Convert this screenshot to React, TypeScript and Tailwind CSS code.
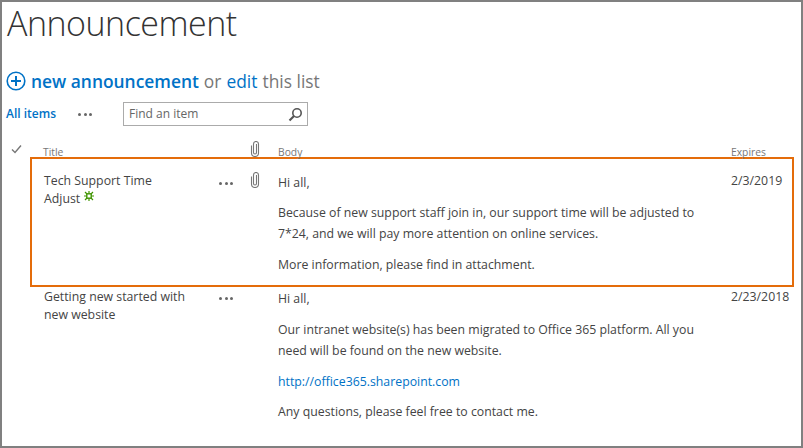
const font = { fontFamily: '"Open Sans", "Noto Sans", sans-serif' };

function Dots() {
  return (
    <div className="flex w-[32px] gap-[2.5px] pl-[1px]">
      <span className="w-[3px] h-[3px] rounded-full bg-[#666]" />
      <span className="w-[3px] h-[3px] rounded-full bg-[#666]" />
      <span className="w-[3px] h-[3px] rounded-full bg-[#666]" />
    </div>
  );
}

function Clip() {
  return (
    <svg width="10" height="16" viewBox="0 0 10 16" fill="none" stroke="#777" strokeWidth="1.1">
      <path d="M3.5 4v7.5a1.5 1.5 0 0 0 3 0V3" />
      <path d="M1.5 4.5v7.5a3.5 3.5 0 0 0 7 0V3a2.5 2.5 0 0 0-5 0v1" />
    </svg>
  );
}

export default function App() {
  return (
    <div style={font} className="w-[803px] h-[448px] overflow-hidden border-2 border-[#808080] bg-white text-[#444]">
      <h1 className="pl-[5px] pt-[1px] h-[44px] text-[34px] leading-[40px] tracking-[-0.5px] font-light text-[#333]">Announcement</h1>

      <div className="flex items-center mt-[19px] pl-[4px] h-[32px] text-[17.4px] text-[#777]">
        <svg width="20" height="20" viewBox="0 0 20 20" fill="none" stroke="#0072c6" strokeWidth="1.6" className="mr-[5px]">
          <circle cx="10" cy="10" r="8.8" />
          <path d="M10 5v10M5 10h10" strokeWidth="2" />
        </svg>
        <span className="font-semibold text-[#0072c6]">new announcement</span>
        <span className="ml-[5px]">or</span>
        <span className="ml-[5px] text-[#0072c6]">edit</span>
        <span className="ml-[5px]">this list</span>
      </div>

      <div className="flex items-center mt-[5px] pl-[4px] h-[24px]">
        <span className="w-[71px] text-[12px] font-semibold text-[#0072c6]">All items</span>
        <Dots />
        <div className="flex items-center justify-between ml-[14px] w-[185px] h-[24px] border border-[#ababab] pl-[5px] pr-[4px] text-[12px] text-[#666]">
          <span>Find an item</span>
          <svg width="15" height="15" viewBox="0 0 15 15" fill="none" stroke="#555">
            <circle cx="9" cy="6" r="4.2" strokeWidth="1.6" />
            <path d="M6 9l-4.5 4.5" strokeWidth="2.2" />
          </svg>
        </div>
      </div>

      <div className="flex items-end mt-[7px] h-[24px] pl-[9px] text-[10.3px] leading-[9px] text-[#777]">
        <svg width="11" height="10" viewBox="0 0 11 10" fill="none" stroke="#777" strokeWidth="1.4" className="mb-[3px]">
          <path d="M1 5.5l3 3 6-7" />
        </svg>
        <span className="ml-[21px] w-[207px]">Title</span>
        <div className="w-[28px]"><Clip /></div>
        <span className="w-[453px]">Body</span>
        <span>Expires</span>
      </div>

      <div className="flex ml-[28px] w-[764px] h-[130px] border-2 border-[#e46c0a] pl-[12px] text-[12.3px] leading-[17px]">
        <div className="w-[174px] pt-[13px] leading-[18px]">
          Tech Support Time<br />Adjust
          <svg width="10" height="10" viewBox="0 0 10 10" fill="none" stroke="#3f9400" className="inline-block ml-[4px] align-[2px]">
            <path d="M5 0v2.5M5 7.5V10M0 5h2.5M7.5 5H10M1 1l2 2M9 1L7 3M1 9l2-2M9 9L7 7" strokeWidth="1.2" />
            <rect x="2.8" y="2.8" width="4.4" height="4.4" strokeWidth="1.4" />
          </svg>
        </div>
        <div className="pt-[23px]"><Dots /></div>
        <div className="w-[28px] pt-[13px]"><Clip /></div>
        <div className="w-[453px] pt-[15px]">
          <p>Hi all,</p>
          <p className="mt-[11px] leading-[21px]">
            Because of new support staff join in, our support time will be adjusted to<br />
            7*24, and we will pay more attention on online services.
          </p>
          <p className="mt-[12px]">More information, please find in attachment.</p>
        </div>
        <div className="pt-[13px]">2/3/2019</div>
      </div>

      <div className="flex ml-[30px] pl-[12px] text-[12.3px] leading-[17px]">
        <div className="w-[174px] pt-[1px] leading-[18px]">Getting new started with<br />new website</div>
        <div className="pt-[10px]"><Dots /></div>
        <div className="w-[28px]" />
        <div className="w-[453px] pt-[3px]">
          <p>Hi all,</p>
          <p className="mt-[12px] leading-[21px]">
            Our intranet website(s) has been migrated to Office 365 platform. All you<br />
            need will be found on the new website.
          </p>
          <p className="mt-[12px] text-[#0072c6]">http://office365.sharepoint.com</p>
          <p className="mt-[13px]">Any questions, please feel free to contact me.</p>
        </div>
        <div className="pt-[1px]">2/23/2018</div>
      </div>
    </div>
  );
}
